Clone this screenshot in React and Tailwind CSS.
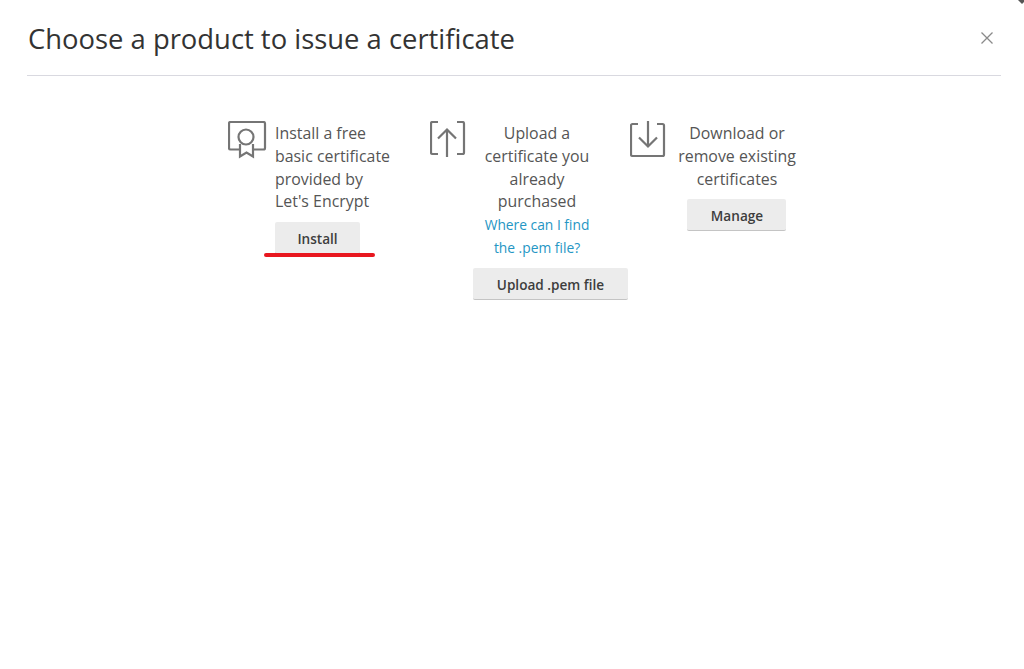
const font = { fontFamily: '"Open Sans", sans-serif' };

function CertIcon() {
  return (
    <svg width="40" height="38" viewBox="0 0 40 38" fill="none" stroke="#757575" strokeWidth="2.200">
      <path d="M11 28.500H2.500A1.500 1.500 0 0 1 1 27V2.500A1.500 1.500 0 0 1 2.500 1h33A1.500 1.500 0 0 1 37 2.500V27a1.500 1.500 0 0 1-1.500 1.500H26" />
      <circle cx="18" cy="16" r="7.500" />
      <path d="M12 23v12.500l6.500-4 6.500 4V23" />
    </svg>
  );
}

function UploadIcon() {
  return (
    <svg width="36" height="38" viewBox="0 0 36 38" fill="none" stroke="#757575" strokeWidth="2.200">
      <path d="M8 1H2.500A1.500 1.500 0 0 0 1 2.500v29A1.500 1.500 0 0 0 2.500 33H8" />
      <path d="M27 1h5.500A1.500 1.500 0 0 1 34 2.500v29a1.500 1.500 0 0 1-1.500 1.500H27" />
      <path d="M17 36V8.500M8 17.500l9-9 9 9" />
    </svg>
  );
}

function DownloadIcon() {
  return (
    <svg width="36" height="38" viewBox="0 0 36 38" fill="none" stroke="#757575" strokeWidth="2.200">
      <path d="M8 3H2.500A1.500 1.500 0 0 0 1 4.500v29A1.500 1.500 0 0 0 2.500 35h30a1.500 1.500 0 0 0 1.500-1.500v-29A1.500 1.500 0 0 0 32.500 3H27" />
      <path d="M18 0v25.500M9 16.500l9 9 9-9" />
    </svg>
  );
}

function ActionButton({ children, className }) {
  return (
    <button className={`h-[32px] rounded-[2px] bg-[#ececec] border-b border-[#c4c4c4] pt-[3px] text-[13.6px] font-semibold text-[#3d3d3d] ${className}`}>
      {children}
    </button>
  );
}

export default function App() {
  return (
    <div className="relative h-[669px] w-[1024px] overflow-hidden bg-white" style={font}>
      <svg className="absolute right-0 top-0" width="6" height="5" viewBox="0 0 6 5">
        <path d="M0 0l4 4 2-2V0z" fill="#555" />
      </svg>

      <div className="ml-[27px] flex h-[76px] w-[974px] items-start justify-between border-b border-[#d9d9e0]">
        <h1 className="mt-[20px] pl-[1px] text-[27.4px] leading-[37px] text-[#333]">Choose a product to issue a certificate</h1>
        <button className="mt-[31px] mr-[7px] text-[#8a8a8a]">
          <svg className="block" width="14" height="14" viewBox="0 0 14 14" stroke="currentColor" strokeWidth="1.300">
            <path d="M1.500 1.500l11 11M12.500 1.500l-11 11" />
          </svg>
        </button>
      </div>

      <div className="flex pl-[228px] pt-[45px] text-[15.9px] leading-[22.8px] text-[#555]">
        {/* Let's Encrypt */}
        <div className="relative flex w-[202px]">
          <div className="w-[47px] shrink-0"><CertIcon /></div>
          <div>
            <p className="w-[125px] pt-[1px]">Install a free basic certificate provided by Let's Encrypt</p>
            <ActionButton className="mt-[9px] w-[85px]">Install</ActionButton>
          </div>
          <div className="absolute left-[36px] top-[132px] h-[4px] w-[111px] rounded-full bg-[#e8171f]" />
        </div>

        {/* Upload */}
        <div className="flex w-[200px]">
          <div className="w-[43px] shrink-0"><UploadIcon /></div>
          <div className="w-[155px]">
            <p className="w-[128px] pt-[1px] text-center">Upload a certificate you already purchased</p>
            <a href="#" className="block w-[128px] text-center text-[13.8px] leading-[23px] text-[#2596c4]">Where can I find<br />the .pem file?</a>
            <ActionButton className="mt-[9px] w-[155px]">Upload .pem file</ActionButton>
          </div>
        </div>

        {/* Manage */}
        <div className="flex">
          <div className="w-[47px] shrink-0"><DownloadIcon /></div>
          <div className="flex w-[120px] flex-col items-center">
            <p className="pt-[1px] text-center">Download or remove existing certificates</p>
            <ActionButton className="mt-[9px] mr-[2px] w-[99px] pl-[2px]">Manage</ActionButton>
          </div>
        </div>
      </div>
    </div>
  );
}
